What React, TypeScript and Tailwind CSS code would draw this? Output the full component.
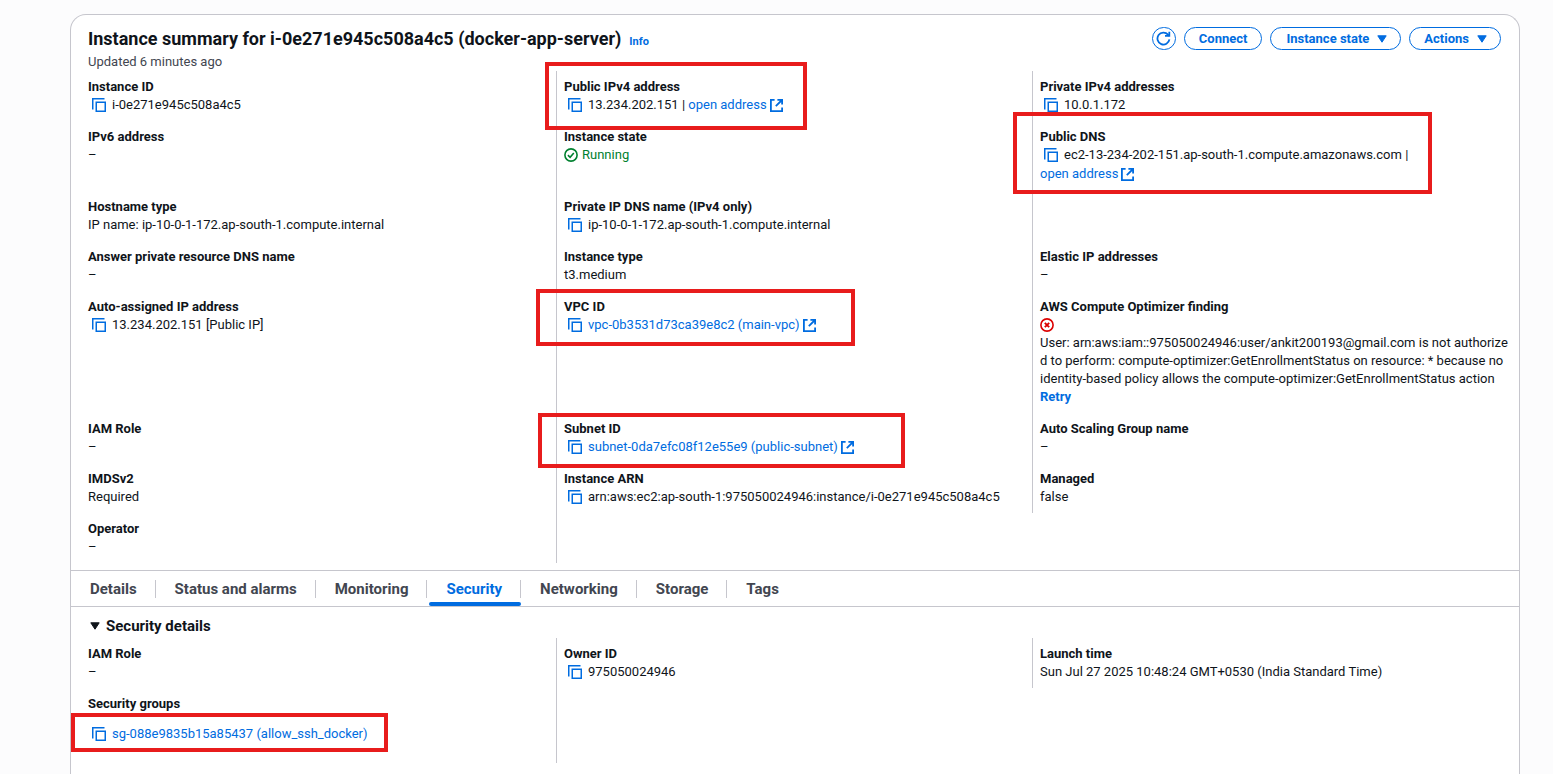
import type { ReactNode } from "react";

function CopyIcon() {
  return (
    <svg width="14" height="14" viewBox="0 0 14 14" fill="none" stroke="currentColor" strokeWidth="1.5" aria-hidden="true">
      <path d="M0.75 11.5V0.75H12.5" />
      <rect x="4.25" y="4.25" width="9" height="9" />
    </svg>
  );
}

function ExternalIcon() {
  return (
    <svg className="inline-block shrink-0" width="13" height="13" viewBox="0 0 13 13" fill="none" stroke="currentColor" strokeWidth="1.8" aria-hidden="true">
      <path d="M4.6 0.9H0.9V12.1H12.1V8.6" />
      <path d="M7.4 0.9H12.1V5.6M12 1L5.8 7.2" />
    </svg>
  );
}

function Caret() {
  return (
    <svg width="10" height="8" viewBox="0 0 10 8" fill="currentColor" stroke="currentColor" strokeLinejoin="round" aria-hidden="true">
      <path d="M0.8 0.8H9.2L5 7.2Z" />
    </svg>
  );
}

function CopyButton({ label }: { label: string }) {
  return (
    <button type="button" aria-label={label} className="ml-1 mr-[6px] shrink-0 text-[#006ce0]">
      <CopyIcon />
    </button>
  );
}

function Copyable({ name, children }: { name: string; children: ReactNode }) {
  return (
    <div className="flex h-[18px] items-center whitespace-nowrap">
      <CopyButton label={`Copy ${name}`} />
      {children}
    </div>
  );
}

function Link({ children, external }: { children: ReactNode; external?: boolean }) {
  return (
    <a href="#" className="inline-flex items-center gap-[3px] whitespace-nowrap text-[#006ce0]">
      {children}
      {external && <ExternalIcon />}
    </a>
  );
}

function Cell({ label, children, first, frame }: { label?: string; children?: ReactNode; first?: boolean; frame?: string }) {
  return (
    <div className={`relative min-w-0 border-l py-[7px] pl-[7px] ${first ? "border-transparent" : "border-[#c6c6cd]"}`}>
      {label && <div className="font-bold">{label}</div>}
      {children}
      {frame && <div className={`pointer-events-none absolute z-10 border-4 border-[#e81c1c] ${frame}`} />}
    </div>
  );
}

const pill = "flex h-[23px] items-center rounded-full border border-[#006ce0] text-[13px] font-bold text-[#006ce0]";

const tabs = ["Details", "Status and alarms", "Monitoring", "Security", "Networking", "Storage", "Tags"];

export default function App() {
  return (
    <main className="flex min-h-screen flex-col bg-[#fcfcfd] pl-[70px] pr-[33px] pt-[14px] font-[Roboto,sans-serif] text-[13px] leading-[18px] text-[#0f141a]">
      <section className="grow rounded-t-[16px] border border-b-0 border-[#c6c6cd] bg-white">
        <header className="flex items-start justify-between pl-[17px] pr-[18px] pt-3">
          <div>
            <div className="flex items-baseline gap-2">
              <h1 className="text-[18px] font-bold leading-6">Instance summary for i-0e271e945c508a4c5 (docker-app-server)</h1>
              <a href="#" className="text-[11px] font-bold text-[#006ce0]">Info</a>
            </div>
            <p className="mt-[2px] text-[#424650]">Updated 6 minutes ago</p>
          </div>
          <div className="flex gap-2">
            <button type="button" aria-label="Refresh" className={`${pill} w-6 justify-center`}>
              <svg className="shrink-0" width="15" height="15" viewBox="0 0 16 16" fill="none" stroke="currentColor" strokeWidth="1.9" aria-hidden="true">
                <path d="M14.3 9A6.4 6.4 0 1 1 12.8 3.9L14 5.2" />
                <path d="M14.2 0.8V5.3H9.6" />
              </svg>
            </button>
            <button type="button" className={`${pill} px-[14px]`}>Connect</button>
            <button type="button" className={`${pill} gap-2 pl-[15px] pr-[13px]`}>
              Instance state <Caret />
            </button>
            <button type="button" className={`${pill} gap-2 pl-[14px] pr-[13px]`}>
              Actions <Caret />
            </button>
          </div>
        </header>

        <div className="mb-[7px] grid grid-cols-3 pl-[9px] pr-[11px]">
          <Cell first label="Instance ID"><Copyable name="instance ID">i-0e271e945c508a4c5</Copyable></Cell>
          <Cell label="Public IPv4 address" frame="-left-3 -top-[9px] h-[68px] w-[262px]">
            <Copyable name="public IPv4 address">13.234.202.151 |&nbsp;<Link external>open address</Link></Copyable>
          </Cell>
          <Cell label="Private IPv4 addresses"><Copyable name="private IPv4 address">10.0.1.172</Copyable></Cell>

          <Cell first label="IPv6 address">–</Cell>
          <Cell label="Instance state">
            <div className="flex items-center gap-1 text-[#00802f]">
              <svg width="14" height="14" viewBox="0 0 14 14" fill="none" stroke="currentColor" strokeWidth="1.6" aria-hidden="true">
                <circle cx="7" cy="7" r="6.1" />
                <path d="M3.9 7.2L6.1 9.3L9.8 5" />
              </svg>
              Running
            </div>
          </Cell>
          <Cell label="Public DNS" frame="-left-5 -top-[9px] h-[82px] w-[419px]">
            <Copyable name="public DNS">ec2-13-234-202-151.ap-south-1.compute.amazonaws.com |</Copyable>
            <div className="flex h-5 items-center"><Link external>open address</Link></div>
          </Cell>

          <Cell first label="Hostname type">IP name: ip-10-0-1-172.ap-south-1.compute.internal</Cell>
          <Cell label="Private IP DNS name (IPv4 only)"><Copyable name="private DNS name">ip-10-0-1-172.ap-south-1.compute.internal</Copyable></Cell>
          <Cell />

          <Cell first label="Answer private resource DNS name">–</Cell>
          <Cell label="Instance type">t3.medium</Cell>
          <Cell label="Elastic IP addresses">–</Cell>

          <Cell first label="Auto-assigned IP address"><Copyable name="auto-assigned IP">13.234.202.151 [Public IP]</Copyable></Cell>
          <Cell label="VPC ID" frame="-left-[21px] -top-[2px] h-[57px] w-[319px]">
            <Copyable name="VPC ID"><Link external>vpc-0b3531d73ca39e8c2 (main-vpc)</Link></Copyable>
          </Cell>
          <Cell label="AWS Compute Optimizer finding">
            <div className="flex h-[18px] items-center text-[#db0000]">
              <svg width="14" height="14" viewBox="0 0 14 14" fill="none" stroke="currentColor" strokeWidth="1.6" aria-hidden="true">
                <circle cx="7" cy="7" r="6.1" />
                <path d="M4.8 4.8L9.2 9.2M9.2 4.8L4.8 9.2" strokeWidth="1.9" />
              </svg>
            </div>
            <p className="whitespace-nowrap">
              User: arn:aws:iam::975050024946:user/ankit200193@gmail.com is not authorize<br />
              d to perform: compute-optimizer:GetEnrollmentStatus on resource: * because no<br />
              identity-based policy allows the compute-optimizer:GetEnrollmentStatus action
            </p>
            <button type="button" className="block font-bold text-[#006ce0]">Retry</button>
          </Cell>

          <Cell first label="IAM Role">–</Cell>
          <Cell label="Subnet ID" frame="-left-[19px] top-0 h-[55px] w-[367px]">
            <Copyable name="subnet ID"><Link external>subnet-0da7efc08f12e55e9 (public-subnet)</Link></Copyable>
          </Cell>
          <Cell label="Auto Scaling Group name">–</Cell>

          <Cell first label="IMDSv2">Required</Cell>
          <Cell label="Instance ARN"><Copyable name="instance ARN">arn:aws:ec2:ap-south-1:975050024946:instance/i-0e271e945c508a4c5</Copyable></Cell>
          <Cell label="Managed">false</Cell>

          <Cell first label="Operator">–</Cell>
          <Cell />
        </div>

        <nav role="tablist" className="flex h-[37px] border-y border-[#c6c6cd] text-[15px] font-bold text-[#424650]">
          {tabs.map((tab) => {
            const active = tab === "Security";
            return (
              <div key={tab} className="relative flex items-center">
                <button type="button" role="tab" aria-selected={active} className={`h-full pl-[19px] pr-[18px] ${active ? "text-[#006ce0]" : ""}`}>
                  {tab}
                </button>
                {tab !== "Tags" && <span className="h-[18px] w-px bg-[#c6c6cd]" />}
                {active && <span className="absolute bottom-0 left-[2px] right-0 h-1 rounded-[2px] bg-[#006ce0]" />}
              </div>
            );
          })}
        </nav>

        <button type="button" aria-expanded="true" className="flex h-[31px] items-center gap-[6px] pl-[19px] pt-[7px] text-[15px] font-bold">
          <Caret />
          Security details
        </button>
        <div className="grid grid-cols-3 pb-3 pl-[9px] pr-[11px]">
          <Cell first label="IAM Role">–</Cell>
          <Cell label="Owner ID"><Copyable name="owner ID">975050024946</Copyable></Cell>
          <Cell label="Launch time">Sun Jul 27 2025 10:48:24 GMT+0530 (India Standard Time)</Cell>

          <Cell first label="Security groups" frame="-left-[10px] top-[25px] h-[39px] w-[317px]">
            <div className="pb-[13px] pt-3">
              <Copyable name="security group"><Link>sg-088e9835b15a85437 (allow_ssh_docker)</Link></Copyable>
            </div>
          </Cell>
          <Cell />
        </div>
      </section>
    </main>
  );
}
